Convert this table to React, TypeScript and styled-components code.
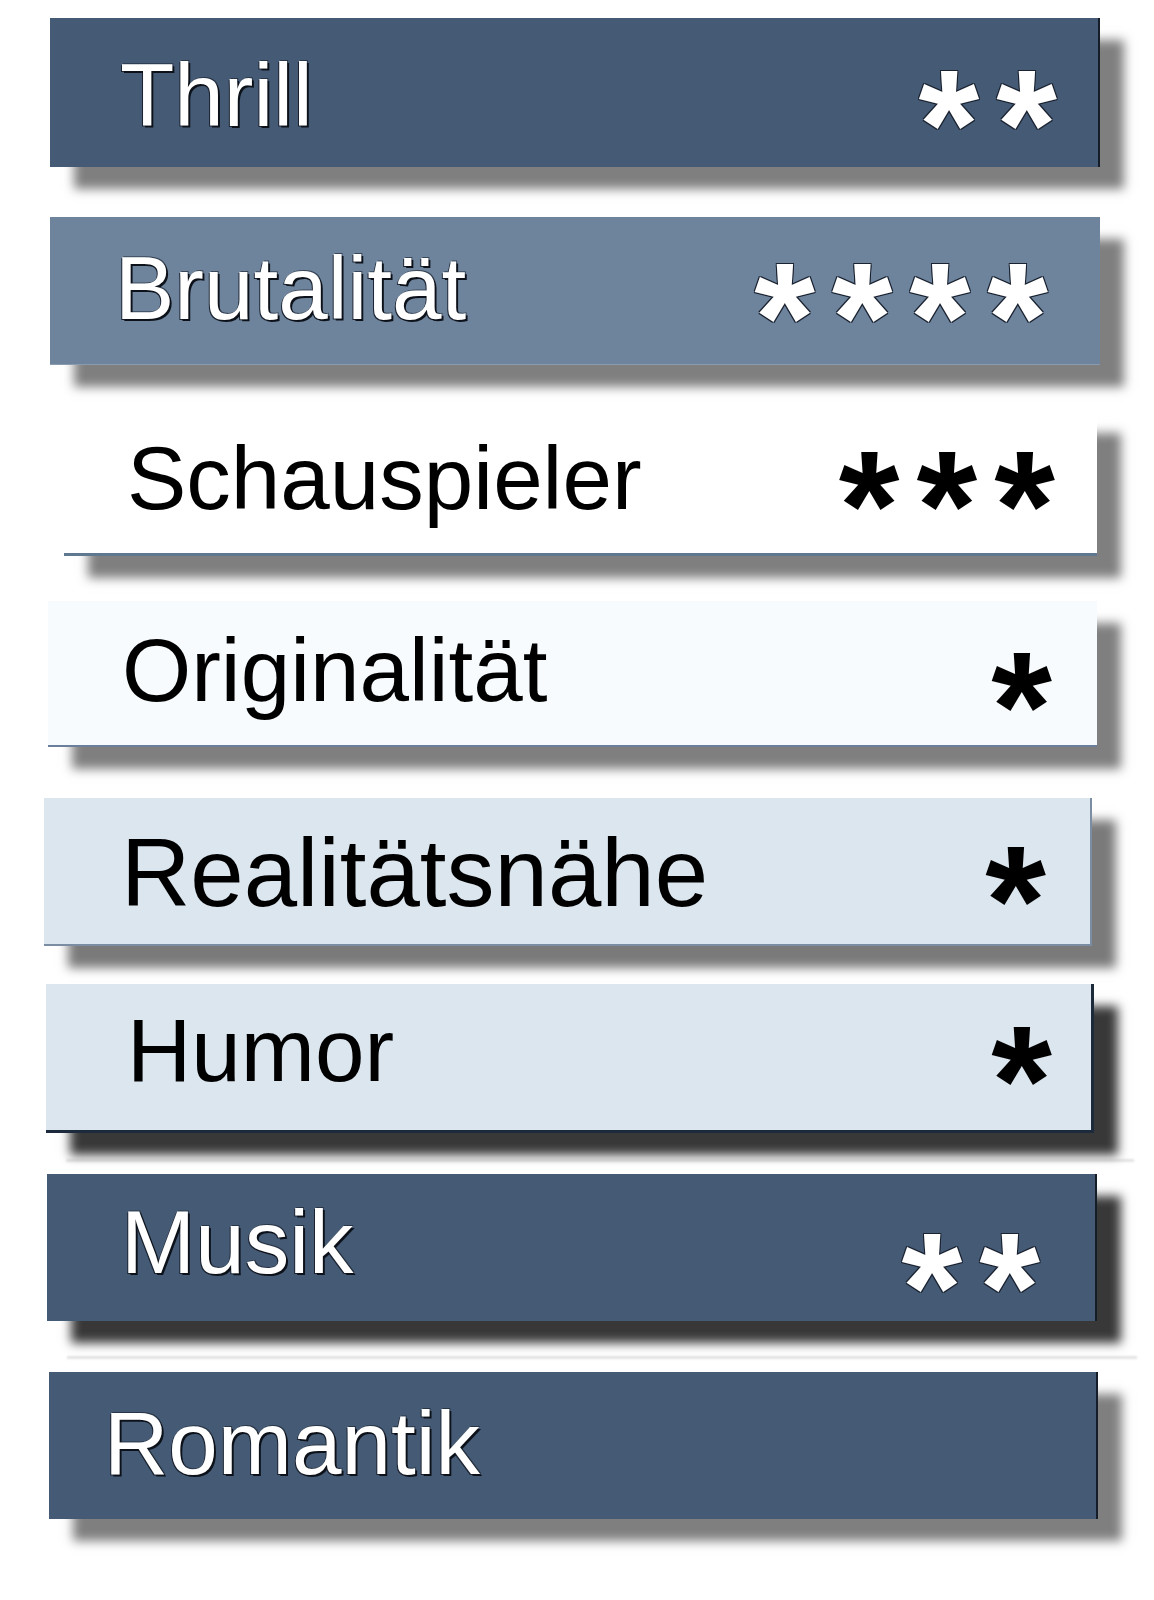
import React from "react";
import styled, { createGlobalStyle } from "styled-components";

const GlobalStyle = createGlobalStyle`
  html, body {
    margin: 0;
    padding: 0;
    background: #ffffff;
  }
  body {
    font-family: "Liberation Sans", Arial, sans-serif;
  }
`;

const Page = styled.main`
  width: 1154px;
  min-height: 1600px;
  background: #ffffff;
  display: flex;
  flex-direction: column;
  padding-top: 18px;
  box-sizing: border-box;
`;

type Tone = "dark" | "slate" | "white" | "snow" | "mist" | "mistDeep";

const tones: Record<
  Tone,
  { bg: string; fg: string; edge: string; shadow: string; outline: boolean }
> = {
  dark: {
    bg: "#455a74",
    fg: "#ffffff",
    edge: "inset -2px 0 0 #151d29",
    shadow: "rgba(0,0,0,0.5)",
    outline: true,
  },
  slate: {
    bg: "#6e849d",
    fg: "#ffffff",
    edge: "inset 0 -1px 0 #8a9bb0",
    shadow: "rgba(0,0,0,0.5)",
    outline: true,
  },
  white: {
    bg: "#ffffff",
    fg: "#000000",
    edge: "inset 0 -3px 0 #607790",
    shadow: "rgba(0,0,0,0.5)",
    outline: false,
  },
  snow: {
    bg: "#f8fbfd",
    fg: "#000000",
    edge: "inset 0 -2px 0 #6a7f99",
    shadow: "rgba(0,0,0,0.5)",
    outline: false,
  },
  mist: {
    bg: "#dce6ef",
    fg: "#000000",
    edge: "inset -2px -2px 0 #7b8da3",
    shadow: "rgba(0,0,0,0.52)",
    outline: false,
  },
  mistDeep: {
    bg: "#dce6ef",
    fg: "#000000",
    edge: "inset -3px -3px 0 #1c2a3c",
    shadow: "rgba(0,0,0,0.78)",
    outline: false,
  },
};

const Bar = styled.section<{
  $tone: Tone;
  $left: number;
  $width: number;
  $height: number;
  $gap: number;
  $padL: number;
  $padR: number;
  $deep?: boolean;
  $trail?: number;
}>`
  position: relative;
  margin-top: ${(p) => p.$gap}px;
  margin-left: ${(p) => p.$left}px;
  width: ${(p) => p.$width}px;
  height: ${(p) => p.$height}px;
  box-sizing: border-box;
  padding: 0 ${(p) => p.$padR}px 0 ${(p) => p.$padL}px;
  display: flex;
  align-items: center;
  justify-content: space-between;
  background: ${(p) => tones[p.$tone].bg};
  color: ${(p) => tones[p.$tone].fg};
  box-shadow: ${(p) => tones[p.$tone].edge},
    24px 22px 10px
      ${(p) => (p.$deep ? "rgba(0,0,0,0.78)" : tones[p.$tone].shadow)};

  &::after {
    content: "";
    display: ${(p) => (p.$trail ? "block" : "none")};
    position: absolute;
    left: 20px;
    right: -40px;
    bottom: -${(p) => p.$trail ?? 0}px;
    height: 3px;
    background: linear-gradient(
      to bottom,
      rgba(160, 160, 160, 0.1),
      rgba(130, 130, 130, 0.35),
      rgba(200, 200, 200, 0.1)
    );
    filter: blur(0.8px);
  }
`;

const Label = styled.h2<{ $size: number; $shift: number; $outline: boolean }>`
  margin: 0;
  font-family: "Liberation Sans", Arial, sans-serif;
  font-weight: 400;
  font-size: ${(p) => p.$size}px;
  line-height: 1;
  letter-spacing: 0;
  transform: translateY(${(p) => p.$shift}px);
  text-shadow: ${(p) =>
    p.$outline
      ? "2px 2px 0 #0d121a, -1px 1px 0 #1a2230, 1px -1px 0 rgba(20,28,40,0.6)"
      : "none"};
`;

const Stars = styled.span<{ $shift: number; $outline: boolean }>`
  font-family: "Liberation Sans", Arial, sans-serif;
  font-weight: 700;
  font-size: 156px;
  line-height: 156px;
  height: 156px;
  letter-spacing: 17px;
  white-space: nowrap;
  transform: translateY(${(p) => 24 + p.$shift}px);
  text-shadow: ${(p) =>
    p.$outline
      ? "1px 1px 0 #1a2230, -1px -1px 0 #1a2230, 1px -1px 0 #1a2230, -1px 1px 0 #1a2230"
      : "none"};
`;

type Row = {
  label: string;
  stars: number;
  tone: Tone;
  left: number;
  width: number;
  height: number;
  gap: number;
  padL: number;
  padR: number;
  size?: number;
  shift: number;
  starShift: number;
  deep?: boolean;
  trail?: number;
};

const rows: Row[] = [
  { label: "Thrill", stars: 2, tone: "dark", left: 50, width: 1050, height: 149, gap: 0, padL: 70, padR: 26, shift: 3, starShift: 7 },
  { label: "Brutalität", stars: 4, tone: "slate", left: 50, width: 1050, height: 148, gap: 50, padL: 65, padR: 35, shift: -3, starShift: 2 },
  { label: "Schauspieler", stars: 3, tone: "white", left: 64, width: 1033, height: 145, gap: 46, padL: 63, padR: 25, shift: -5, starShift: -3 },
  { label: "Originalität", stars: 1, tone: "snow", left: 48, width: 1049, height: 146, gap: 45, padL: 74, padR: 28, shift: -4, starShift: 8 },
  { label: "Realitätsnähe", stars: 1, tone: "mist", left: 44, width: 1048, height: 148, gap: 51, padL: 77, padR: 29, size: 96, shift: 1, starShift: 4 },
  { label: "Humor", stars: 1, tone: "mistDeep", left: 46, width: 1048, height: 149, gap: 38, padL: 81, padR: 25, shift: -8, starShift: -3, deep: true, trail: 29 },
  { label: "Musik", stars: 2, tone: "dark", left: 47, width: 1050, height: 147, gap: 41, padL: 74, padR: 40, shift: -5, starShift: 15, deep: true, trail: 38 },
  { label: "Romantik", stars: 0, tone: "dark", left: 49, width: 1049, height: 147, gap: 51, padL: 55, padR: 40, shift: -2, starShift: 0 },
];

export default function App() {
  return (
    <>
      <GlobalStyle />
      <Page>
        {rows.map((r) => {
          const t = tones[r.tone];
          return (
            <Bar
              key={r.label}
              $tone={r.tone}
              $left={r.left}
              $width={r.width}
              $height={r.height}
              $gap={r.gap}
              $padL={r.padL}
              $padR={r.padR}
              $deep={r.deep}
              $trail={r.trail}
            >
              <Label $size={r.size ?? 89} $shift={r.shift} $outline={t.outline}>
                {r.label}
              </Label>
              {r.stars > 0 && (
                <Stars $shift={r.starShift} $outline={t.outline}>
                  {"*".repeat(r.stars)}
                </Stars>
              )}
            </Bar>
          );
        })}
      </Page>
    </>
  );
}
